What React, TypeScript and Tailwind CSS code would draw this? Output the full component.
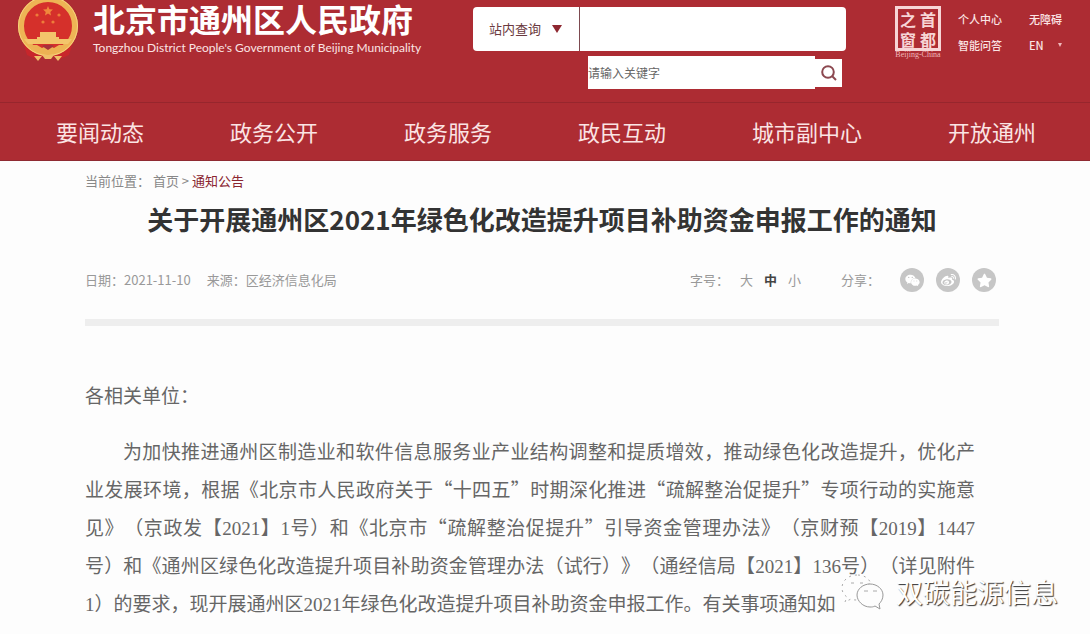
import { useState } from 'react'
import { FaWeixin, FaWeibo, FaStar } from 'react-icons/fa'

const NAV = ['要闻动态', '政务公开', '政务服务', '政民互动', '城市副中心', '开放通州']

const SIZES = ['大', '中', '小']

const SHARE = [
  { label: '微信', Icon: FaWeixin },
  { label: '微博', Icon: FaWeibo },
  { label: '收藏', Icon: FaStar },
]

// Half-width serif digits inside the Chinese body text
function Num({ children }: { children: string }) {
  return <span className="font-['Liberation_Serif',serif] leading-none">{children}</span>
}

function Emblem() {
  return (
    <svg viewBox="0 0 62 64" className="h-16 w-[62px] shrink-0" aria-hidden="true">
      <path d="M6 42 L10 55 L19 59 L31 55 L43 59 L52 55 L56 42 Z" fill="#c8262b" />
      <circle cx="31" cy="26" r="27" fill="#d5302b" stroke="#eeb455" strokeWidth="6" />
      <circle cx="31" cy="26" r="29.5" fill="none" stroke="#f6d27c" strokeWidth="1" />
      <path d="M31 6l1.4 3.2 3.5.4-2.6 2.3.7 3.5-3-1.8-3 1.8.7-3.5-2.6-2.3 3.5-.4z" fill="#f0883c" />
      <g fill="#ee7c3a">
        <circle cx="20" cy="15" r="1.6" />
        <circle cx="42" cy="15" r="1.6" />
        <circle cx="26" cy="22" r="1.6" />
        <circle cx="36" cy="22" r="1.6" />
      </g>
      <path d="M23 32h16v5h3v2h13l-4 5H11l-4-5h13v-2h3z" fill="#f3c56b" />
      <path d="M13 45h7l5 3 6-3 6 3 5-3h7l-8 7-10 3-10-3z" fill="#edb253" />
      <path d="M25 46l6 4 6-4-2-1h-8z" fill="#a8323a" />
      <path d="M17 56h8l-4 5zM37 56h8l-4 5zM25 55h12l-3 4h-6z" fill="#f0c069" />
    </svg>
  )
}

function Header() {
  return (
    <header className="bg-[#ad2c33] text-white">
      <div className="flex h-[103px] items-start border-b border-[#97262d]">
        <div className="flex w-[473px] shrink-0 items-start gap-[14px] pl-[17px]">
          <Emblem />
          <div className="whitespace-nowrap">
            <h1 className="text-[32px] font-bold leading-9">北京市通州区人民政府</h1>
            <p className="mt-1 font-['Lato',sans-serif] text-xs leading-4 text-[#fbe4e4]">
              Tongzhou District People's Government of Beijing Municipality
            </p>
          </div>
        </div>

        <form className="flex-1 pt-[7px]" onSubmit={(e) => e.preventDefault()}>
          <div className="flex h-11 overflow-hidden rounded-sm bg-white text-[13px] text-[#6b3a40]">
            <div className="relative w-[107px] shrink-0 border-r border-[#7d4a50]">
              <select aria-label="查询范围" className="h-full w-full appearance-none bg-transparent pl-4 outline-none">
                <option>站内查询</option>
              </select>
              <svg viewBox="0 0 12 8" className="pointer-events-none absolute right-4 top-[18px] h-2 w-3" aria-hidden="true">
                <path d="M1 0h10L6 8z" fill="#8e2730" />
              </svg>
            </div>
            <input aria-label="查询" className="min-w-0 flex-1 px-2 outline-none" />
          </div>
          <div className="mt-[5px] flex items-center pl-[115px] pr-1">
            <input
              aria-label="关键字"
              placeholder="请输入关键字"
              className="h-[33px] min-w-0 flex-1 bg-white text-xs text-[#555] outline-none placeholder:text-[#666]"
            />
            <button aria-label="搜索" className="flex h-7 w-[27px] items-center justify-center bg-white">
              <svg viewBox="0 0 16 16" className="h-4 w-4" fill="none" stroke="#8c4850" strokeWidth="2">
                <circle cx="7" cy="7" r="5.8" />
                <path d="M11 11l4 4" />
              </svg>
            </button>
          </div>
        </form>

        <div className="flex w-[244px] shrink-0 gap-4 pl-12 pt-[6px] text-[#fbe4e4]">
          <div className="flex w-12 shrink-0 flex-col items-center">
            <div className="grid h-[45px] w-[46px] grid-cols-2 place-items-center border-3 border-[#f7d5d6] text-base font-bold leading-5 text-[#f7d5d6]">
              <span>之</span>
              <span>首</span>
              <span>窗</span>
              <span>都</span>
            </div>
            <span className="whitespace-nowrap font-['Liberation_Serif',serif] text-[8px] leading-[8px] text-[#f0b8ba]">
              Beijing-China
            </span>
          </div>
          <div className="grid grid-cols-[71px_auto] content-start whitespace-nowrap text-[11px] font-medium leading-[26px]">
            <a href="#user">个人中心</a>
            <a href="#access">无障碍</a>
            <a href="#qa">智能问答</a>
            <a href="#en" className="flex items-center justify-between">
              EN
              <svg viewBox="0 0 4 4" className="h-1 w-1" aria-hidden="true">
                <path d="M0 0h4L2 4z" fill="#f0b8ba" />
              </svg>
            </a>
          </div>
        </div>
      </div>

      <nav className="flex h-[58px] items-center justify-between border-b border-[#8f2a32] pl-14 pr-[54px] text-[22px] text-[#fbe4e4]">
        {NAV.map((item) => (
          <a key={item} href={`#${item}`}>
            {item}
          </a>
        ))}
      </nav>
    </header>
  )
}

function Watermark() {
  return (
    <div className="absolute bottom-5 right-8 flex items-center gap-3 text-[27px] leading-[44px] text-white [text-shadow:1px_1px_1px_#333]">
      <svg viewBox="0 0 44 38" className="h-[38px] w-11" aria-hidden="true">
        <path
          d="M17 2C8 2 2 8 2 15c0 4 2 7 5 9l-2 5 6-3c2 1 4 1 6 1h1C17 18 23 11 31 11 29 5 24 2 17 2z"
          fill="#fdfdfd"
          stroke="#aaa"
          strokeWidth="1"
          strokeDasharray="2 4"
        />
        <path
          d="M30 11c-7 0-13 5-13 11s6 12 13 12c2 0 3 0 5-1l5 3-1-5c2-2 4-5 4-9 0-6-6-11-13-11z"
          fill="#fdfdfd"
          stroke="#999"
          strokeWidth="1"
        />
        <path d="M24 18h4M33 18h4M11 10h3M20 10h3" stroke="#aaa" strokeWidth="1" />
      </svg>
      双碳能源信息
    </div>
  )
}

export default function App() {
  const [size, setSize] = useState('中')

  return (
    <div className="relative min-h-screen overflow-hidden bg-[#fdfdfd] font-['Noto_Sans_CJK_SC',sans-serif] [text-spacing-trim:space-all]">
      <Header />

      <main className="pl-[85px] pr-[91px]">
        <div className="pt-2 text-[13px] leading-6 text-[#888]">
          当前位置： <a href="#home">首页</a> &gt;{' '}
          <a href="#notice" className="text-[#8a2530]">
            通知公告
          </a>
        </div>

        <h2 className="mt-[6px] whitespace-nowrap text-center text-[26px] font-bold leading-10 text-[#333]">
          关于开展通州区2021年绿色化改造提升项目补助资金申报工作的通知
        </h2>

        <div className="mt-[25px] flex h-8 items-center justify-between text-[13px] text-[#999]">
          <div className="flex gap-4">
            <span>日期：2021-11-10</span>
            <span>来源：区经济信息化局</span>
          </div>
          <div className="flex items-center pr-[3px]">
            <span>字号：</span>
            <div className="ml-[11px] flex gap-[11px]">
              {SIZES.map((s) => (
                <button key={s} onClick={() => setSize(s)} className={s === size ? 'font-bold text-[#444]' : ''}>
                  {s}
                </button>
              ))}
            </div>
            <span className="ml-10">分享：</span>
            <div className="ml-5 flex gap-3">
              {SHARE.map(({ label, Icon }) => (
                <button
                  key={label}
                  aria-label={label}
                  className="flex h-6 w-6 items-center justify-center rounded-full bg-[#c6c6c6] text-white"
                >
                  <Icon size={15} />
                </button>
              ))}
            </div>
          </div>
        </div>

        <div className="mt-[23px] h-[7px] bg-[#eee]" />

        <article className="pr-6 pt-[50px] text-justify text-[19px] leading-[38px] text-[#666]">
          <p>各相关单位：</p>
          <p className="mt-[18px] indent-[2em]">
            为加快推进通州区制造业和软件信息服务业产业结构调整和提质增效，推动绿色化改造提升，优化产业发展环境，根据《北京市人民政府关于“十四五”时期深化推进“疏解整治促提升”专项行动的实施意见》（京政发【<Num>2021</Num>】<Num>1</Num>号）和《北京市“疏解整治促提升”引导资金管理办法》（京财预【<Num>2019</Num>】<Num>1447</Num>号）和《通州区绿色化改造提升项目补助资金管理办法（试行）》（通经信局【<Num>2021</Num>】<Num>136</Num>号）（详见附件<Num>1</Num>）的要求，现开展通州区<Num>2021</Num>年绿色化改造提升项目补助资金申报工作。有关事项通知如
          </p>
        </article>
      </main>

      <Watermark />
    </div>
  )
}
